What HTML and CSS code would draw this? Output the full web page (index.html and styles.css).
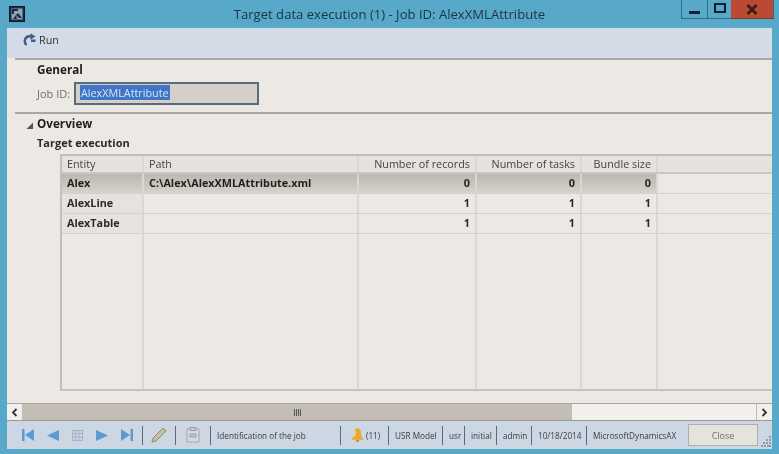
FILE: index.html
```html
<!DOCTYPE html>
<html lang="en">
<head>
<meta charset="utf-8">
<title>Target data execution</title>
<link rel="stylesheet" href="styles.css">
</head>
<body>
<div class="window">
  <header class="titlebar">
    <svg class="appicon" width="16" height="16" viewBox="0 0 16 16"><rect x="0.5" y="0.5" width="15" height="15" fill="#1d2c40" stroke="#0d1a2a"/><rect x="2.5" y="2.5" width="11" height="11" fill="#8fa6b8"/><path d="M3 3h6v2H5v3H3zM9 7l4 5h-3L7 9zM4 13l3-4 1 4z" fill="#1d2c40"/></svg>
    <div class="title">Target data execution (1) - Job ID: AlexXMLAttribute</div>
    <div class="winbtns">
      <div class="winbtn min"><span class="minbar"></span></div>
      <div class="winbtn max"><span class="maxbox"></span></div>
      <div class="winbtn close">
        <svg width="12" height="11" viewBox="0 0 12 11"><path d="M1.5 1l9 9M10.5 1l-9 9" stroke="#3a1a14" stroke-width="2.6"/></svg>
      </div>
    </div>
  </header>
  <div class="client">
    <div class="toolbar">
      <svg class="runicon" width="13" height="13" viewBox="0 0 13 13"><path d="M3.500 12C.5 9 1.500 3.500 6.500 3.200h2" fill="none" stroke="#3f5f85" stroke-width="2.400"/><path d="M7.500.3l5 3.200-5 3.200z" fill="#3f5f85"/><path d="M8 6.500h4.500v2.500H8z" fill="#3f5f85"/></svg>
      <span>Run</span>
    </div>
    <section class="general">
      <h2 class="head">General</h2>
      <div class="field">
        <label class="fieldlabel">Job ID:</label>
        <div class="input"><span class="selected">AlexXMLAttribute</span></div>
      </div>
    </section>
    <section class="overview">
      <div class="overhead">
        <svg class="arrow" width="7" height="7" viewBox="0 0 7 7"><path d="M7 0.500V7H0.500z" fill="#555"/></svg>
        <h2 class="head">Overview</h2>
      </div>
      <h3 class="subhead">Target execution</h3>
      <div class="grid">
        <div class="row header">
          <div class="cell">Entity</div><div class="cell">Path</div><div class="cell num">Number of records</div><div class="cell num">Number of tasks</div><div class="cell num">Bundle size</div><div class="cell rest"></div>
        </div>
        <div class="row active">
          <div class="cell">Alex</div><div class="cell">C:\Alex\AlexXMLAttribute.xml</div><div class="cell num">0</div><div class="cell num">0</div><div class="cell num">0</div><div class="cell rest"></div>
        </div>
        <div class="row data">
          <div class="cell">AlexLine</div><div class="cell"></div><div class="cell num">1</div><div class="cell num">1</div><div class="cell num">1</div><div class="cell rest"></div>
        </div>
        <div class="row data">
          <div class="cell">AlexTable</div><div class="cell"></div><div class="cell num">1</div><div class="cell num">1</div><div class="cell num">1</div><div class="cell rest"></div>
        </div>
        <div class="row empty">
          <div class="cell"></div><div class="cell"></div><div class="cell"></div><div class="cell"></div><div class="cell"></div><div class="cell rest"></div>
        </div>
      </div>
    </section>
    <div class="hscroll">
      <div class="scrollbtn"><svg width="7" height="9" viewBox="0 0 7 9"><path d="M5.500 1L2 4.500 5.500 8" fill="none" stroke="#333" stroke-width="1.800"/></svg></div>
      <div class="thumb"><span class="grip"></span></div>
      <div class="track"></div>
      <div class="scrollbtn right"><svg width="7" height="9" viewBox="0 0 7 9"><path d="M1.500 1L5 4.500 1.500 8" fill="none" stroke="#333" stroke-width="1.800"/></svg></div>
    </div>
    <footer class="statusbar">
      <div class="nav">
        <svg width="12" height="12" viewBox="0 0 12 12"><path d="M0 0h2.500v12H0zM12 0v12L3 6z" fill="#5b9bd5"/></svg>
        <svg width="12" height="11" viewBox="0 0 12 11"><path d="M12 0v11L0 5.500z" fill="#5b9bd5"/></svg>
        <svg width="11" height="11" viewBox="0 0 11 11"><path d="M.5 0v11M3.500 0v11M7 0v11M10.500 0v11M0 .5h11M0 3.500h11M0 7h11M0 10.500h11" stroke="#a4b4cf"/></svg>
        <svg width="12" height="11" viewBox="0 0 12 11"><path d="M0 0v11L12 5.500z" fill="#5b9bd5"/></svg>
        <svg width="12" height="12" viewBox="0 0 12 12"><path d="M12 0H9.500v12H12zM0 0v12L9 6z" fill="#5b9bd5"/></svg>
      </div>
      <span class="sep"></span>
      <svg class="pencil" width="16" height="16" viewBox="0 0 16 16"><path d="M1 15l1-4L12 1l3 3L5 14z" fill="#c7bfa0" stroke="#8d8a78"/></svg>
      <span class="sep"></span>
      <svg class="doc" width="14" height="16" viewBox="0 0 14 16"><path d="M1 2h12v13H1z" fill="#d5dae2" stroke="#a5a8ad"/><path d="M4 .5h6v3H4zM4 7h6v3H4z" fill="#c5cad2" stroke="#9a9da3"/></svg>
      <span class="sep"></span>
      <span class="stat w-help">Identification of the job</span>
      <span class="sep"></span>
      <svg class="bell" width="15" height="16" viewBox="0 0 17 17"><path d="M8.500 1C5 1 4.500 4 4.500 7c0 3-1.500 5-3 7h14c-1.500-2-3-4-3-7 0-3-.5-6-4-6z" fill="#e8a92c"/><path d="M6.500 14.500h4a2 2 0 0 1-4 0z" fill="#b9791a"/><path d="M6 3.500C5.500 5 5.500 8 5 10" stroke="#f8df90" stroke-width="1.500" fill="none"/></svg>
      <span class="stat w-count">(11)</span>
      <span class="sep"></span>
      <span class="stat w-model">USR Model</span>
      <span class="sep"></span>
      <span class="stat w-usr">usr</span>
      <span class="sep"></span>
      <span class="stat w-initial">initial</span>
      <span class="sep"></span>
      <span class="stat w-admin">admin</span>
      <span class="sep"></span>
      <span class="stat w-date">10/18/2014</span>
      <span class="sep"></span>
      <span class="stat w-company">MicrosoftDynamicsAX</span>
      <div class="closebtn">Close</div>
      <svg class="resize" width="10" height="12" viewBox="0 0 10 12"><path d="M8 1h2v2H8zM5 4h2v2H5zM8 4h2v2H8zM2 7h2v2H2zM5 7h2v2H5zM8 7h2v2H8zM0 10h2v2H0zM3 10h2v2H3zM6 10h2v2H6zM8 10h2v2H8z" fill="#8f9aa6"/></svg>
    </footer>
  </div>
</div>
</body>
</html>
```
FILE: styles.css
```css
* { box-sizing: border-box; }
html, body { margin: 0; padding: 0; }
body {
  width: 779px;
  height: 454px;
  overflow: hidden;
  font-family: "Open Sans", "Noto Sans", sans-serif;
  font-size: 10.800px;
  color: #2b2b2b;
}
.window {
  width: 779px;
  height: 454px;
  background: #57a8c9;
  padding: 0 7px 5px 7px;
  display: flex;
  flex-direction: column;
  filter: blur(0.35px);
}
.titlebar {
  height: 28px;
  flex: none;
  display: flex;
  align-items: flex-start;
}
.appicon { margin: 6px 0 0 2px; flex: none; }
.title {
  flex: 1;
  text-align: center;
  font-size: 13.100px;
  line-height: 29px;
  color: #1c3340;
  padding-left: 73px;
  white-space: nowrap;
}
.winbtns {
  display: flex;
  height: 19px;
  margin-right: -2px;
  flex: none;
}
.winbtn {
  height: 19px;
  border-bottom: 1px solid #2f6d85;
  border-left: 1px solid #2f6d85;
  display: flex;
  align-items: center;
  justify-content: center;
}
.min { width: 26px; }
.max { width: 24px; }
.close { width: 43px; background: #bb4a33; border-left: none; border-right: 1px solid #2f6d85; border-bottom-color: #7b3a2b; }
.minbar { display: block; width: 11px; height: 3px; background: #10222c; margin-top: 7px; }
.maxbox { display: block; width: 12px; height: 10px; border: 2.500px solid #0d1e28; margin-top: -2px; }
.client {
  flex: 1;
  background: #ece9e5;
  display: flex;
  flex-direction: column;
  min-height: 0;
}
.toolbar {
  height: 30px;
  flex: none;
  background: #d3dbe6;
  display: flex;
  align-items: center;
  padding: 0 0 8px 16px;
  gap: 3px;
  color: #333;
}
.general {
  height: 56px;
  flex: none;
  margin-left: 8px;
  padding: 0 0 0 22px;
  border-top: 2px solid #a9a7a9;
  border-bottom: 2px solid #aca7a5;
}
.head {
  margin: 0;
  font-size: 11.700px;
  font-weight: 700;
  line-height: 19px;
  color: #1e1e1e;
}
.field {
  display: flex;
  align-items: center;
  margin-top: 3px;
}
.fieldlabel { color: #6f6f6f; width: 37px; flex: none; font-size: 11px; }
.input {
  width: 185px;
  height: 23px;
  background: #d5cfca;
  border: 2px solid #5a6b7c;
  padding: 1px 0 0 4px;
  line-height: 15px;
}
.selected { background: #3f74c6; color: #d8e4f5; display: inline-block; padding: 0 1px; }
.overview {
  flex: 1;
  min-height: 0;
  display: flex;
  flex-direction: column;
  padding-bottom: 12px;
}
.overhead {
  display: flex;
  align-items: center;
  height: 19px;
  padding-left: 19px;
  gap: 4px;
}
.arrow { margin-top: 3px; }
.subhead {
  margin: 0;
  font-size: 11px;
  font-weight: 700;
  line-height: 15px;
  height: 21px;
  padding: 2px 0 0 30px;
  color: #2a2a2a;
}
.grid {
  flex: 1;
  margin-left: 53px;
  border-top: 2px solid #c2bfbb;
  border-left: 2px solid #c2bfbb;
  border-bottom: 2px solid #c6c3bf;
  display: flex;
  flex-direction: column;
  min-height: 0;
}
.row {
  display: grid;
  grid-template-columns: 82px 215px 118px 105px 76px 1fr;
  height: 20px;
  flex: none;
  border-bottom: 1px solid #d5d2ce;
}
.cell {
  padding: 0 5px;
  line-height: 18px;
  border-right: 2px solid #dbd8d4;
  white-space: nowrap;
  overflow: hidden;
}
.cell.rest { border-right: none; }
.num { text-align: right; }
.header { height: 18px; background: #e5e2de; color: #444; border-bottom: 2px solid #cac7c3; }
.header .cell { line-height: 16px; }
.active { background: linear-gradient(#bdb7b1, #cfc9c3 70%, #d8d3ce); font-weight: 700; color: #1f1f1f; }
.active .rest { background: #ece9e5; }
.data { font-weight: 700; color: #2a2a2a; background: #ece9e5; }
.data .cell:first-child { background: #e6e3df; }
.empty { flex: 1; border-bottom: none; }
.hscroll {
  height: 18px;
  flex: none;
  display: flex;
  background: #f0eeea;
  border-bottom: 1px solid #9a9a9a;
  border-top: 1px solid #a9a6a2;
}
.scrollbtn {
  width: 16px;
  flex: none;
  background: #f2f0ed;
  display: flex;
  align-items: center;
  justify-content: center;
  border-right: 1px solid #bbb;
}
.scrollbtn.right { border-right: none; border-left: 1px solid #bbb; }
.thumb {
  width: 549px;
  flex: none;
  background: #c4bdb4;
  display: flex;
  align-items: center;
  justify-content: center;
}
.grip { display: block; width: 8px; height: 7px; background: repeating-linear-gradient(90deg, #555 0 1px, transparent 1px 2px); }
.track { flex: 1; background: #f2f0ed; }
.statusbar {
  height: 28px;
  flex: none;
  background: #cdd6e3;
  display: flex;
  align-items: center;
  font-size: 8.200px;
  color: #3d3d3d;
  padding-left: 15px;
  white-space: nowrap;
}
.nav {
  display: flex;
  align-items: center;
  gap: 13px;
  width: 120px;
  flex: none;
}
.sep {
  display: block;
  width: 1px;
  height: 19px;
  background: #5b6a7a;
  flex: none;
}
.pencil { margin: 0 8px; flex: none; }
.doc { margin: 0 10px; flex: none; }
.stat { flex: none; padding: 1px 0 0 6px; }
.w-help { width: 129px; }
.bell { margin-left: 9px; flex: none; }
.w-count { width: 23px; padding-left: 1px; }
.w-model { width: 53px; }
.w-usr { width: 21px; }
.w-initial { width: 31px; }
.w-admin { width: 34px; }
.w-date { width: 54px; }
.w-company { width: 101px; }
.closebtn {
  width: 70px;
  height: 22px;
  background: #e6e2de;
  border: 1px solid #b2afa9;
  text-align: center;
  line-height: 21px;
  color: #6e6e6e;
  font-size: 9px;
  flex: none;
}
.resize { margin: 12px 0 0 3px; flex: none; }
```
